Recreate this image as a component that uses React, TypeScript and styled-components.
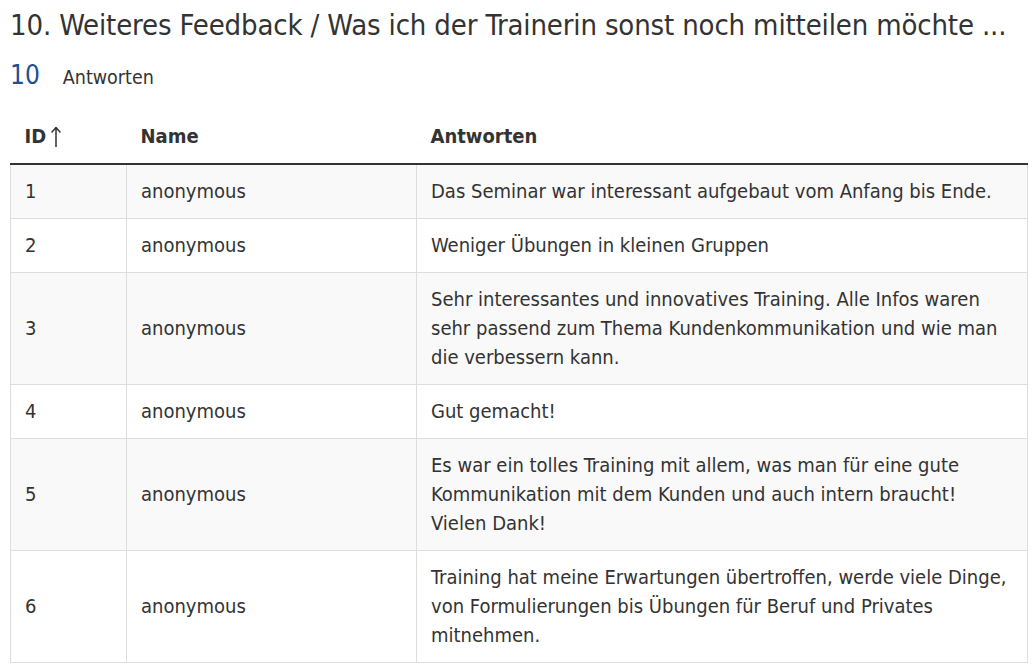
import styled, { createGlobalStyle } from "styled-components";

const GlobalStyle = createGlobalStyle`
  html, body {
    margin: 0;
    padding: 0;
    background: #fff;
  }
  body {
    font-family: "DejaVu Sans Condensed", "DejaVu Sans", sans-serif;
    color: #333;
  }
`;

interface Answer {
  id: number;
  name: string;
  text: string;
}

const answers: Answer[] = [
  { id: 1, name: "anonymous", text: "Das Seminar war interessant aufgebaut vom Anfang bis Ende." },
  { id: 2, name: "anonymous", text: "Weniger Übungen in kleinen Gruppen" },
  {
    id: 3,
    name: "anonymous",
    text: "Sehr interessantes und innovatives Training. Alle Infos waren sehr passend zum Thema Kundenkommunikation und wie man die verbessern kann.",
  },
  { id: 4, name: "anonymous", text: "Gut gemacht!" },
  {
    id: 5,
    name: "anonymous",
    text: "Es war ein tolles Training mit allem, was man für eine gute Kommunikation mit dem Kunden und auch intern braucht!\nVielen Dank!",
  },
  {
    id: 6,
    name: "anonymous",
    text: "Training hat meine Erwartungen übertroffen, werde viele Dinge, von Formulierungen bis Übungen für Beruf und Privates mitnehmen.",
  },
];

const SortArrow = () => (
  <ArrowIcon width="10" height="21" viewBox="0 0 10 21" aria-hidden="true">
    <path d="M5 2v19M1 6l4-4.5L9 6" fill="none" stroke="#333" strokeWidth="1.5" strokeLinecap="round" strokeLinejoin="round" />
  </ArrowIcon>
);

const App = () => {
  return (
    <Page>
      <GlobalStyle />
      <Title>10. Weiteres Feedback / Was ich der Trainerin sonst noch mitteilen möchte ...</Title>
      <Count>
        <span className="num">10</span>
        <span className="label">Antworten</span>
      </Count>
      <Table>
        <colgroup>
          <col style={{ width: 116 }} />
          <col style={{ width: 290 }} />
          <col />
        </colgroup>
        <thead>
          <tr>
            <HeadCell>
              ID
              <SortArrow />
            </HeadCell>
            <HeadCell>Name</HeadCell>
            <HeadCell>Antworten</HeadCell>
          </tr>
        </thead>
        <tbody>
          {answers.map((a, i) => (
            <Row key={a.id} $striped={i % 2 === 0}>
              <Cell>{a.id}</Cell>
              <Cell>{a.name}</Cell>
              <Cell className="text">{a.text}</Cell>
            </Row>
          ))}
        </tbody>
      </Table>
    </Page>
  );
};

export default App;

const Page = styled.div`
  padding: 7px 4px 0 10px;
`;

const Title = styled.h2`
  margin: 0;
  font-size: 29px;
  font-weight: normal;
  line-height: 36px;
  letter-spacing: -0.15px;
  color: #333;
  white-space: nowrap;
`;

const Count = styled.div`
  display: flex;
  align-items: baseline;
  gap: 23px;
  height: 30px;
  line-height: 30px;
  margin-top: 17px;

  .num {
    font-size: 26px;
    color: #1d4f91;
  }
  .label {
    font-size: 19.5px;
    color: #333;
  }
`;

const Table = styled.table`
  width: 1018px;
  margin-top: 20px;
  border-collapse: collapse;
  table-layout: fixed;
  font-size: 20px;
  line-height: 29px;
`;

const HeadCell = styled.th`
  text-align: left;
  font-weight: bold;
  line-height: 28px;
  padding: 12px 14px 13px 14px;
  border-bottom: 2px solid #333;
  color: #333;
  white-space: nowrap;
`;

const ArrowIcon = styled.svg`
  display: inline-block;
  margin-left: 5px;
  vertical-align: -4px;
`;

const Row = styled.tr<{ $striped: boolean }>`
  background: ${(p) => (p.$striped ? "#f9f9f9" : "#fff")};
`;

const Cell = styled.td`
  padding: 12px 14px;
  border: 1px solid #ddd;
  border-top: none;
  vertical-align: middle;
  color: #333;

  &.text {
    white-space: pre-line;
  }
`;
